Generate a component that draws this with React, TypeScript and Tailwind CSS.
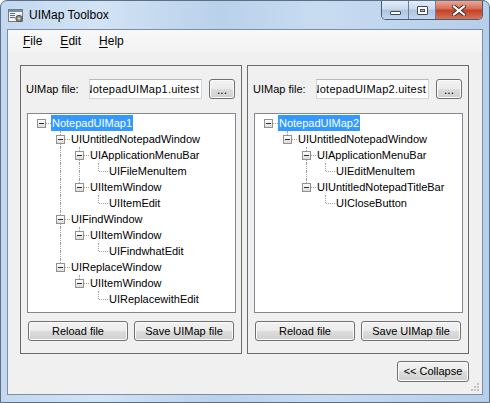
import React from "react";

type TreeNode = { label: string; level: number };

const leftTree: TreeNode[] = [
  { label: "NotepadUIMap1", level: 0 },
  { label: "UIUntitledNotepadWindow", level: 1 },
  { label: "UIApplicationMenuBar", level: 2 },
  { label: "UIFileMenuItem", level: 3 },
  { label: "UIItemWindow", level: 2 },
  { label: "UIItemEdit", level: 3 },
  { label: "UIFindWindow", level: 1 },
  { label: "UIItemWindow", level: 2 },
  { label: "UIFindwhatEdit", level: 3 },
  { label: "UIReplaceWindow", level: 1 },
  { label: "UIItemWindow", level: 2 },
  { label: "UIReplacewithEdit", level: 3 },
];

const rightTree: TreeNode[] = [
  { label: "NotepadUIMap2", level: 0 },
  { label: "UIUntitledNotepadWindow", level: 1 },
  { label: "UIApplicationMenuBar", level: 2 },
  { label: "UIEditMenuItem", level: 3 },
  { label: "UIUntitledNotepadTitleBar", level: 2 },
  { label: "UICloseButton", level: 3 },
];

function hasNext(nodes: TreeNode[], idx: number) {
  const lvl = nodes[idx].level;
  for (let j = idx + 1; j < nodes.length; j++) {
    if (nodes[j].level < lvl) return false;
    if (nodes[j].level === lvl) return true;
  }
  return false;
}

function Cell({ up, down, right, box }: { up?: boolean; down?: boolean; right?: boolean; box?: boolean }) {
  return (
    <div className="relative w-[19px] h-[16px] shrink-0">
      {up && <div className="absolute left-[9px] top-0 h-[8px] border-l border-dotted border-[#a0a0a0]" />}
      {down && <div className="absolute left-[9px] top-[8px] h-[8px] border-l border-dotted border-[#a0a0a0]" />}
      {right && <div className="absolute left-[10px] top-[8px] w-[9px] border-t border-dotted border-[#a0a0a0]" />}
      {box && (
        <div className="absolute left-[5px] top-[4px] w-[9px] h-[9px] border border-[#919191] bg-[linear-gradient(#ffffff,#dcdcdc)] flex items-center justify-center">
          <div className="w-[5px] h-px bg-[#2b2b2b]" />
        </div>
      )}
    </div>
  );
}

function Tree({ nodes }: { nodes: TreeNode[] }) {
  return (
    <div className="ml-[6px] mt-[14px] w-[209px] h-[200px] border border-[#828790] bg-white pt-[1px] overflow-hidden">
      {nodes.map((n, i) => {
        const cols = [];
        for (let k = 0; k < n.level; k++) {
          let a = i - 1;
          while (a > 0 && nodes[a].level !== k) a--;
          cols.push(<Cell key={k} up={hasNext(nodes, a)} down={hasNext(nodes, a)} />);
        }
        const kids = i + 1 < nodes.length && nodes[i + 1].level === n.level + 1;
        cols.push(<Cell key="own" up={i !== 0} down={hasNext(nodes, i)} right box={kids} />);
        return (
          <div key={i} className="flex h-[16px] pl-[4px]">
            {cols}
            <span
              className={`pl-[1px] pr-[1px] leading-[16px] whitespace-nowrap ${i === 0 ? "bg-[#3399ff] text-white" : "text-black"}`}
            >
              {n.label}
            </span>
          </div>
        );
      })}
    </div>
  );
}

function Btn({ children, w, h = "h-[20px]" }: { children: React.ReactNode; w: string; h?: string }) {
  return (
    <div
      className={`${w} ${h} rounded-[3px] border border-[#707070] bg-[linear-gradient(#f2f2f2_0%,#ebebeb_50%,#dddddd_50%,#cfcfcf_100%)] shadow-[inset_0_0_0_1px_#fcfcfc] flex items-center justify-center text-[11px] text-black`}
    >
      {children}
    </div>
  );
}

function Panel({ file, nodes }: { file: string; nodes: TreeNode[] }) {
  return (
    <div className="w-[222px] h-[289px] border border-[#6b6b6b] flex flex-col text-[11px]">
      <div className="mt-[13px] flex items-center h-[20px]">
        <div className="w-[68px] pl-[5px]">UIMap file:</div>
        <div className="w-[113px] h-[20px] border border-[#d3d6dc] border-t-[#b5b9c0] bg-white flex items-center justify-end pr-[2px] overflow-hidden whitespace-nowrap tracking-[0.25px]">
          {file}
        </div>
        <div className="ml-[7px]">
          <Btn w="w-[26px]">
            <span className="text-[12px] leading-none mt-[2px]">...</span>
          </Btn>
        </div>
      </div>
      <Tree nodes={nodes} />
      <div className="mt-[8px] ml-[7px] flex gap-[6px]">
        <Btn w="w-[100px]">Reload file</Btn>
        <Btn w="w-[100px]">Save UIMap file</Btn>
      </div>
    </div>
  );
}

function AppIcon() {
  return (
    <svg width="16" height="16" viewBox="0 0 16 16">
      <rect x="0.5" y="1.5" width="14" height="12" fill="#f4f4f4" stroke="#7a7a7a" />
      <rect x="1" y="2" width="13" height="2" fill="#6e8fb8" />
      <rect x="2" y="5" width="5" height="1" fill="#4a6fa5" />
      <rect x="2" y="7" width="5" height="1" fill="#4a6fa5" />
      <rect x="2" y="9" width="5" height="1" fill="#4a6fa5" />
      <circle cx="11" cy="10.5" r="3.2" fill="#8a8a8a" stroke="#555" strokeWidth="1" />
      <circle cx="11" cy="10.5" r="1.1" fill="#e0e0e0" />
    </svg>
  );
}

export default function App() {
  return (
    <div className="w-[490px] h-[403px] overflow-hidden font-['Liberation_Sans',Arial,sans-serif]">
      <div className="w-full h-full flex flex-col rounded-t-[7px] border border-[#5b6f88] bg-[linear-gradient(to_right,#c3d8ef,#d2e3f4_20%,#b9d1ea_45%,#c8dcf1_65%,#b6cee9)]">
        <div className="h-[28px] flex items-start pl-[7px]">
          <div className="mt-[7px]">
            <AppIcon />
          </div>
          <div className="ml-[5px] mt-[6px] leading-[16px] text-[12px] text-black">UIMap Toolbox</div>
          <div className="ml-auto mr-[6px] flex h-[19px] border border-t-0 border-[#4b5d76] rounded-b-[5px] overflow-hidden">
            <div className="w-[27px] bg-[linear-gradient(#e3ecf7,#cbdaee_45%,#aec4df_50%,#c3d6ec)] flex items-center justify-center border-r border-[#6c7f98]">
              <div className="w-[11px] h-[4px] mt-[5px] bg-white border border-[#3b4a5e] rounded-[1px]" />
            </div>
            <div className="w-[27px] bg-[linear-gradient(#e3ecf7,#cbdaee_45%,#aec4df_50%,#c3d6ec)] flex items-center justify-center border-r border-[#6c7f98]">
              <div className="w-[11px] h-[9px] bg-white border border-[#3b4a5e] rounded-[1px] flex items-center justify-center">
                <div className="w-[5px] h-[3px] bg-[#b8c9de] border border-[#3b4a5e]" />
              </div>
            </div>
            <div className="w-[46px] bg-[linear-gradient(#e9a898,#d86a52_45%,#c43f24_50%,#d5745a)] flex items-center justify-center">
              <svg width="14" height="11" viewBox="0 0 14 11">
                <path d="M2 1.5 L12 9.5 M12 1.5 L2 9.5" stroke="#3a2a28" strokeWidth="4" strokeLinecap="square" />
                <path d="M2 1.5 L12 9.5 M12 1.5 L2 9.5" stroke="#ffffff" strokeWidth="2.2" strokeLinecap="square" />
              </svg>
            </div>
          </div>
        </div>

        <div className="relative mx-[6px] h-[366px] border border-[#7b8ea5] bg-[#f0f0f0] flex flex-col">
          <div className="h-[22px] flex items-center pl-[15px] gap-[18px] text-[12px] text-black bg-[linear-gradient(#f8f8f9,#f3f3f4)]">
            <span><span className="underline underline-offset-2">F</span>ile</span>
            <span><span className="underline underline-offset-2">E</span>dit</span>
            <span><span className="underline underline-offset-2">H</span>elp</span>
          </div>

          <div className="mt-[13px] pl-[12px] flex gap-[5px]">
            <Panel file="NotepadUIMap1.uitest" nodes={leftTree} />
            <Panel file="NotepadUIMap2.uitest" nodes={rightTree} />
          </div>

          <div className="mt-[7px] flex justify-end pr-[13px]">
            <Btn w="w-[72px]" h="h-[21px]">&lt;&lt; Collapse</Btn>
          </div>

          <svg className="absolute right-[2px] bottom-[2px]" width="10" height="10" viewBox="0 0 10 10">
            <rect x="7" y="1" width="2" height="2" fill="#c2c2c2" />
            <rect x="4" y="4" width="2" height="2" fill="#c2c2c2" />
            <rect x="7" y="4" width="2" height="2" fill="#c2c2c2" />
            <rect x="1" y="7" width="2" height="2" fill="#c2c2c2" />
            <rect x="4" y="7" width="2" height="2" fill="#c2c2c2" />
            <rect x="7" y="7" width="2" height="2" fill="#c2c2c2" />
          </svg>
        </div>
      </div>
    </div>
  );
}
